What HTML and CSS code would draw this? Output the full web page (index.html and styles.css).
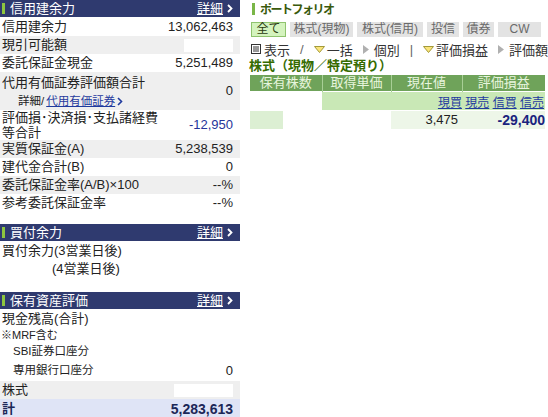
FILE: index.html
```html
<!DOCTYPE html>
<html lang="ja">
<head>
    <meta charset="UTF-8">
    <title>口座サマリー</title>
    <link rel="stylesheet" href="styles.css">
</head>
<body>
    <div class="page">
        <div class="side">
            <section class="panel">
                <div class="panel-head">
                    <span class="panel-title">信用建余力</span>
                    <a href="#" class="more"><span>詳細</span><svg width="6" height="9" viewBox="0 0 6 9"><path d="M1 1l3.5 3.5L1 8" fill="none" stroke="#fff" stroke-width="1.8"/></svg></a>
                </div>
                <div class="row"><span>信用建余力</span><span>13,062,463</span></div>
                <div class="row alt"><span>現引可能額</span><span class="mask"></span></div>
                <div class="row"><span>委託保証金現金</span><span>5,251,489</span></div>
                <div class="row alt row-sub">
                    <div class="label">
                        <div class="line-main">代用有価証券評価額合計</div>
                        <div class="line-sub">詳細/ <a href="#" class="link">代用有価証券</a> <svg width="6" height="9" viewBox="0 0 6 9"><path d="M1 1l3.5 3.5L1 8" fill="none" stroke="#1f3a9e" stroke-width="1.6"/></svg></div>
                    </div>
                    <span>0</span>
                </div>
                <div class="row row-wrap">
                    <div class="label">評価損･決済損･支払諸経費<br>等合計</div>
                    <span class="minus">-12,950</span>
                </div>
                <div class="row alt"><span>実質保証金(A)</span><span>5,238,539</span></div>
                <div class="row"><span>建代金合計(B)</span><span>0</span></div>
                <div class="row alt"><span>委託保証金率(A/B)×100</span><span>--%</span></div>
                <div class="row"><span>参考委託保証金率</span><span>--%</span></div>
            </section>

            <section class="panel">
                <div class="panel-head">
                    <span class="panel-title">買付余力</span>
                    <a href="#" class="more"><span>詳細</span><svg width="6" height="9" viewBox="0 0 6 9"><path d="M1 1l3.5 3.5L1 8" fill="none" stroke="#fff" stroke-width="1.8"/></svg></a>
                </div>
                <div class="row"><span>買付余力(3営業日後)</span></div>
                <div class="row"><span class="indent-day">(4営業日後)</span></div>
            </section>

            <section class="panel panel-last">
                <div class="panel-head">
                    <span class="panel-title">保有資産評価</span>
                    <a href="#" class="more"><span>詳細</span><svg width="6" height="9" viewBox="0 0 6 9"><path d="M1 1l3.5 3.5L1 8" fill="none" stroke="#fff" stroke-width="1.8"/></svg></a>
                </div>
                <div class="cash">
                    <div class="row"><span>現金残高(合計)</span></div>
                    <div class="note">※MRF含む</div>
                    <div class="row small"><span>SBI証券口座分</span></div>
                    <div class="row small"><span>専用銀行口座分</span><span class="num">0</span></div>
                </div>
                <div class="row alt stock"><span>株式</span><span class="mask wide"></span></div>
                <div class="row total"><span>計</span><span>5,283,613</span></div>
            </section>
        </div>

        <div class="main">
            <div class="main-title">ポートフォリオ</div>

            <div class="tabs">
                <span class="tab on t1">全て</span>
                <span class="tab t2">株式(現物)</span>
                <span class="tab t3">株式(信用)</span>
                <span class="tab t4">投信</span>
                <span class="tab t5">債券</span>
                <span class="tab t6">CW</span>
            </div>

            <div class="toolbar">
                <svg class="list-icon" width="10" height="10" viewBox="0 0 10 10"><rect x="0.5" y="0.5" width="9" height="9" fill="#fff" stroke="#333"/><path d="M2 3h6M2 5h6M2 7h6" stroke="#333"/></svg>
                <span class="tb-text">表示</span>
                <span class="sep">/</span>
                <svg class="tri-down" width="11" height="7" viewBox="0 0 11 7"><path d="M0.5 0.5h10L5.5 6.5z" fill="#fbe57a" stroke="#a39a3a"/></svg>
                <span class="tb-text">一括</span>
                <svg class="tri-right" width="6" height="9" viewBox="0 0 6 9"><path d="M0 0l6 4.5L0 9z" fill="#b0b0b0"/></svg>
                <span class="tb-text">個別</span>
                <span class="sep">|</span>
                <svg class="tri-down" width="11" height="7" viewBox="0 0 11 7"><path d="M0.5 0.5h10L5.5 6.5z" fill="#fbe57a" stroke="#a39a3a"/></svg>
                <span class="tb-text">評価損益</span>
                <svg class="tri-right" width="6" height="9" viewBox="0 0 6 9"><path d="M0 0l6 4.5L0 9z" fill="#b0b0b0"/></svg>
                <span class="tb-text">評価額</span>
            </div>

            <div class="sub-title">株式（現物／特定預り）</div>

            <table class="holdings">
                <tr class="head">
                    <th class="c1">保有株数</th>
                    <th class="c2">取得単価</th>
                    <th class="c3">現在値</th>
                    <th class="c4">評価損益</th>
                </tr>
                <tr class="links-row">
                    <td class="blank"></td>
                    <td class="green"></td>
                    <td class="green links" colspan="2">
                        <a href="#">現買</a> <a href="#">現売</a> <a href="#">信買</a> <a href="#">信売</a>
                    </td>
                </tr>
                <tr class="data-row">
                    <td class="part"></td>
                    <td class="blank"></td>
                    <td class="pale price">3,475</td>
                    <td class="pale pl">-29,400</td>
                </tr>
            </table>
        </div>
    </div>
</body>
</html>
```

FILE: styles.css
```css
* {
    margin: 0;
    padding: 0;
    box-sizing: border-box;
}

body {
    font-family: "Liberation Sans", "Noto Sans CJK JP", sans-serif;
    font-size: 13px;
    color: #222;
    background-color: #fff;
}

a {
    color: #1f3a9e;
}

.page {
    display: flex;
    align-items: flex-start;
}

/* left column */

.side {
    width: 240px;
}

.panel + .panel {
    margin-top: 12px;
}

.panel-last {
    margin-top: 14px !important;
}

.panel-head {
    display: flex;
    justify-content: space-between;
    align-items: center;
    height: 17px;
    margin-bottom: 1px;
    padding: 0 7px 0 2px;
    background-color: #2f3a6f;
    color: #fff;
}

.panel-title {
    display: flex;
    align-items: center;
    gap: 5px;
    line-height: 17px;
}

.panel-title::before {
    content: "";
    width: 3px;
    height: 11px;
    background-color: #8dc63f;
}

.more {
    display: flex;
    align-items: center;
    gap: 4px;
    color: #fff;
    line-height: 17px;
}

.more span {
    text-decoration: underline;
}

.row {
    display: flex;
    justify-content: space-between;
    align-items: center;
    height: 18px;
    line-height: 18px;
    padding: 0 7px 0 2px;
}

.row.alt {
    background-color: #efefef;
}

.mask {
    display: block;
    width: 49px;
    height: 13px;
    background-color: #fff;
}

.mask.wide {
    width: 59px;
}

.row-sub {
    height: 38px;
}

.row-sub .line-main {
    line-height: 20px;
}

.row-sub .line-sub {
    display: flex;
    align-items: center;
    gap: 2px;
    padding-left: 16px;
    font-size: 11.5px;
    line-height: 16px;
}

.row-wrap {
    height: 30px;
}

.row-wrap .label {
    line-height: 15px;
}

.minus {
    color: #25349a;
}

.indent-day {
    padding-left: 50px;
}

.cash {
    padding-bottom: 1px;
}

.note {
    height: 14px;
    line-height: 14px;
    font-size: 11px;
    padding-left: 1px;
}

.row.small {
    height: 19px;
    line-height: 19px;
    font-size: 11.5px;
    padding-left: 13px;
}

.row.small .num {
    font-size: 13px;
}

.row.total {
    height: 19px;
    background-color: #dfe4f6;
    font-weight: bold;
    color: #1c2757;
}

.row.total span:last-child {
    font-size: 14px;
}

/* right column */

.main {
    width: 299px;
    margin-left: 9px;
}

.main-title {
    display: flex;
    align-items: center;
    gap: 5px;
    height: 17px;
    padding-left: 3px;
    font-size: 12px;
    letter-spacing: -1.5px;
    font-weight: bold;
    color: #3a5a0c;
}

.main-title::before {
    content: "";
    width: 3px;
    height: 12px;
    background-color: #7ab648;
}

.tabs {
    display: flex;
    gap: 4px;
    margin-top: 5px;
    padding-left: 2px;
}

.tab {
    height: 15px;
    line-height: 15px;
    font-size: 12px;
    text-align: center;
    background-color: #e3e3e3;
    color: #6a6a6a;
}

.tab.on {
    background-color: #d4f3be;
    border: 1px solid #8fc36e;
    line-height: 13px;
    color: #2a3a10;
}

.t1 { width: 35px; }
.t2 { width: 63px; }
.t3 { width: 66px; }
.t4 { width: 32px; }
.t5 { width: 31px; }
.t6 { width: 43px; }

.toolbar {
    display: flex;
    align-items: center;
    height: 16px;
    margin-top: 4px;
    padding-left: 2px;
    color: #333;
}

.list-icon {
    margin-right: 3px;
}

.sep {
    margin: 0 10px;
    color: #666;
}

.tri-down {
    margin-right: 2px;
}

.tri-right {
    margin: 0 5px 0 10px;
}

.sub-title {
    height: 17px;
    line-height: 17px;
    padding-left: 0;
    font-weight: bold;
    color: #356b00;
}

.holdings {
    width: 295px;
    margin-left: 1px;
    margin-top: 1px;
    border-collapse: collapse;
}

.holdings th {
    height: 16px;
    padding: 0;
    font-weight: normal;
    color: #e7f5dd;
    background-color: #6fa35a;
    border-left: 1px solid #a8cf96;
    line-height: 16px;
}

.holdings th:first-child {
    border-left: none;
}

.c1 { width: 72px; }
.c2 { width: 69px; }
.c3 { width: 71px; }
.c4 { width: 83px; }

.holdings td {
    padding: 0;
    border-top: 1px solid #fff;
}

.links-row td {
    height: 19px;
}

.data-row td {
    height: 18px;
}

.green {
    background-color: #c9e8b6;
}

.pale {
    background-color: #edf6e8;
}

.part {
    background: linear-gradient(to right, #dcefd3 33px, #fff 33px);
}

.links {
    text-align: right;
    padding-right: 1px !important;
    font-size: 12px;
}

.links a {
    color: #1f3a9e;
}

.price {
    text-align: right;
    padding-right: 4px !important;
}

.pl {
    text-align: right;
    font-weight: bold;
    font-size: 14px;
    color: #1a237e;
}
```
